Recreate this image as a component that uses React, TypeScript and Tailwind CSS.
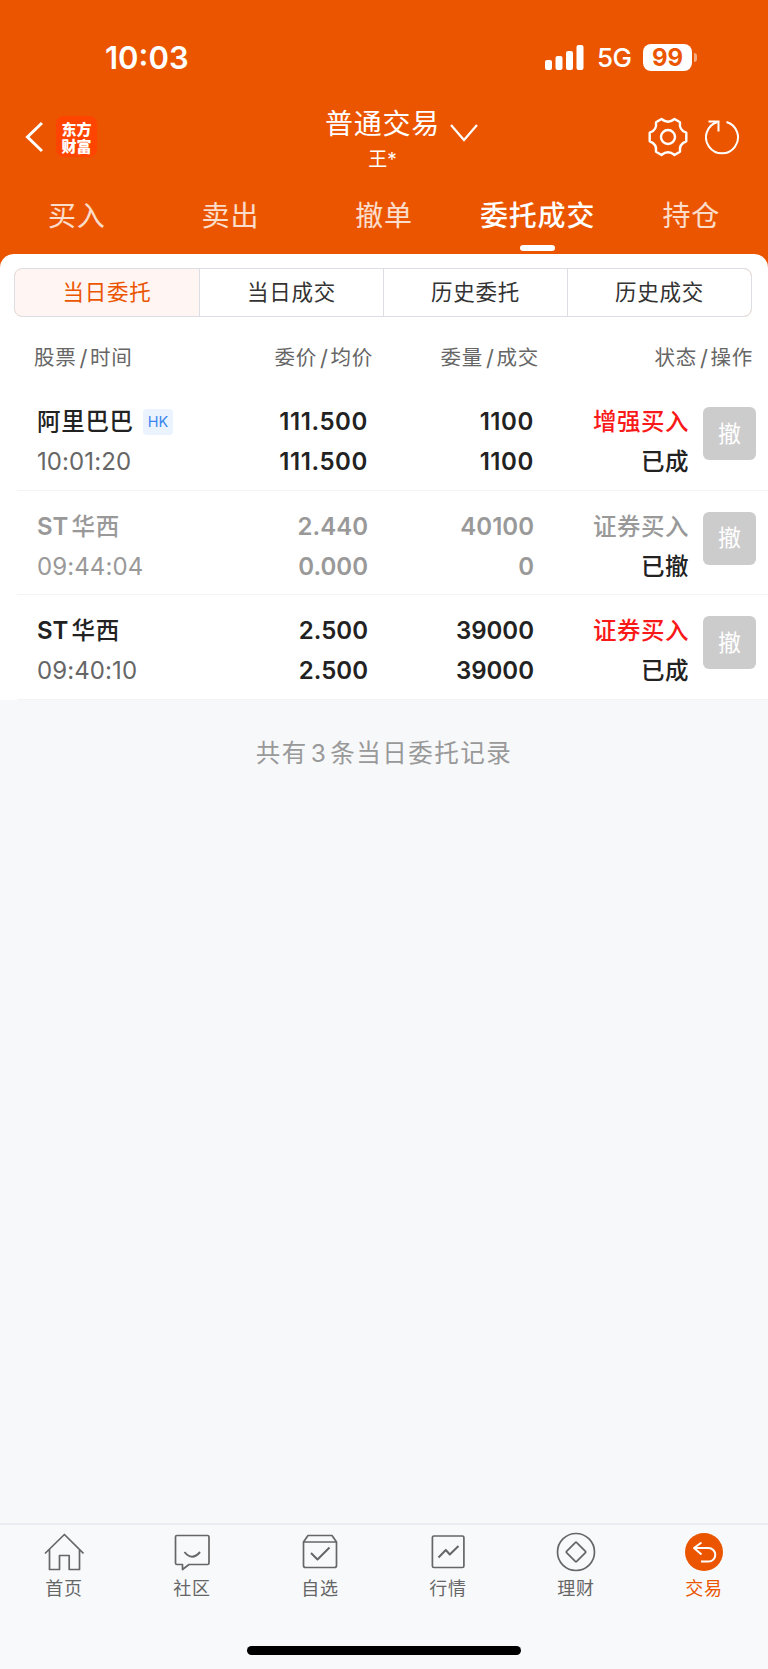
import type { ReactNode } from "react";
import clsx from "clsx";

const tabs = ["买入", "卖出", "撤单", "委托成交", "持仓"];
const segments = ["当日委托", "当日成交", "历史委托", "历史成交"];

type Order = {
  prefix?: string;
  name: string;
  market?: string;
  time: string;
  price: string;
  avg: string;
  amount: string;
  filled: string;
  action: string;
  status: string;
  canceled?: boolean;
};

const orders: Order[] = [
  { name: "阿里巴巴", market: "HK", time: "10:01:20", price: "111.500", avg: "111.500", amount: "1100", filled: "1100", action: "增强买入", status: "已成" },
  { prefix: "ST", name: "华西", time: "09:44:04", price: "2.440", avg: "0.000", amount: "40100", filled: "0", action: "证券买入", status: "已撤", canceled: true },
  { prefix: "ST", name: "华西", time: "09:40:10", price: "2.500", avg: "2.500", amount: "39000", filled: "39000", action: "证券买入", status: "已成" },
];

const StatusBar = () => (
  <div className="flex h-[100px] items-start justify-between pl-[105px] pr-[71px] pt-[36px] text-white">
    <span className="pt-[1px] text-[31px] font-semibold leading-[42px]">10:03</span>
    <div className="flex h-[42px] items-center">
      <svg width="39" height="25" viewBox="0 0 39 25" fill="currentColor" className="mr-[13px]">
        <rect x="0" y="15" width="7" height="10" rx="2" />
        <rect x="10.5" y="11" width="7" height="14" rx="2" />
        <rect x="21" y="6" width="7" height="19" rx="2" />
        <rect x="31.5" y="0" width="7" height="25" rx="2" />
      </svg>
      <span className="w-[46px] pt-[2px] text-[26px] font-medium leading-[42px] tracking-[-0.5px]">5G</span>
      <span className="h-[27px] w-[49px] rounded-[8px] bg-white text-center text-[24px] font-bold leading-[27px] text-[#eb5500]">99</span>
      <span className="ml-[2px] h-[9px] w-[3px] rounded-r-full bg-white/50" />
    </div>
  </div>
);

const Header = () => (
  <header className="flex h-[80px] items-center justify-between pl-[25px] pr-[27px] text-white">
    <div className="flex w-[250px] items-center pb-[7px]">
      <svg width="18" height="32" viewBox="0 0 18 32" fill="none" stroke="currentColor" strokeWidth="3">
        <path d="M17 2 2.500 16 17 30" />
      </svg>
      <div className="ml-[13px] flex size-[41px] flex-col items-center justify-center rounded-[8px] bg-[#ff4400] font-['Noto_Sans_CJK_SC',sans-serif] text-[15px] font-black leading-[17px]">
        <span>东方</span>
        <span>财富</span>
      </div>
    </div>
    <div className="flex pb-[1px]">
      <div className="flex flex-col items-center">
        <span className="text-[28px] leading-[38px] tracking-[0.8px]">普通交易</span>
        <span className="mt-[1px] text-[19px] leading-[31px]">王*</span>
      </div>
      <svg width="30" height="20" viewBox="0 0 30 20" fill="none" stroke="currentColor" strokeWidth="2.2" className="ml-[9px] mt-[18px]">
        <path d="M2 2 15 17 28 2" />
      </svg>
    </div>
    <div className="flex w-[212px] items-center justify-end gap-[17px] pb-[7px]">
      <svg width="40" height="40" viewBox="0 0 40 40" fill="none" stroke="currentColor" strokeWidth="2.4" strokeLinejoin="round">
        <path d="M8 5.200 13.500 2Q20 7.500 26.500 2L32 5.200Q30.800 13.200 38.300 15.700V24.300Q30.800 26.800 32 34.800L26.500 38Q20 32.500 13.500 38L8 34.800Q9.200 26.800 1.700 24.300V15.700Q9.200 13.200 8 5.200Z" />
        <circle cx="20" cy="20" r="7" />
      </svg>
      <svg width="36" height="36" viewBox="0 0 36 36" fill="none" stroke="currentColor" strokeWidth="2">
        <path d="M21.500 3A16 16 0 1 1 12.500 3" />
        <path d="M3.500 2.500H13.500V12.500" />
      </svg>
    </div>
  </header>
);

const Tabs = () => (
  <nav className="grid h-[74px] grid-cols-5 text-[28px] text-white">
    {tabs.map((tab) => {
      const active = tab === "委托成交";
      return (
        <div key={tab} className="flex flex-col items-center pt-[15px]">
          <span className={clsx("whitespace-nowrap leading-[42px] tracking-[0.8px]", active ? "font-medium" : "text-white/80")}>{tab}</span>
          {active && <span className="mt-[8px] h-[6px] w-[35px] rounded-full bg-white" />}
        </div>
      );
    })}
  </nav>
);

const Segments = () => (
  <div className="relative ml-[14px] mr-[16px] grid h-[49px] grid-cols-4 overflow-hidden rounded-[8px] border border-[#dddee4]">
    {segments.map((label, i) => (
      <div
        key={label}
        className={clsx(
          "flex items-center justify-center text-[21.5px] tracking-[0.7px]",
          i === 0 ? "bg-[#fff6f3] text-[#eb5500]" : "border-l border-[#dddee4] text-[#333]",
        )}
      >
        {label}
      </div>
    ))}
    {/* Accent corners */}
    <span className="absolute -left-px -top-px size-[10px] rounded-tl-[8px] border-l border-t border-[#eea57f]" />
    <span className="absolute -bottom-px -left-px size-[10px] rounded-bl-[8px] border-b border-l border-[#eea57f]" />
    <span className="absolute -right-px -top-px size-[10px] rounded-tr-[8px] border-r border-t border-[#eea57f]" />
    <span className="absolute -bottom-px -right-px size-[10px] rounded-br-[8px] border-b border-r border-[#eea57f]" />
  </div>
);

const HeadCell = ({ a, b }: { a: string; b: string }) => (
  <span className="flex justify-end tracking-[0.7px]">
    {a}
    <span className="ml-[3px] mr-[2px] text-[22px]">/</span>
    {b}
  </span>
);

const OrderRow = ({ order }: { order: Order }) => {
  const tone = order.canceled ? "text-[#999]" : "text-[#222]";
  const spread = order.price.startsWith("11") && "tracking-[0.6px]";
  return (
    <div className="ml-[17px] flex h-[104.6px] border-b border-[#f2f3f5] pl-[20px] pt-[16px] text-[24px] leading-[40px]">
      <div className="w-[180px]">
        <div className={clsx("flex items-center font-medium", tone)}>
          {order.prefix && <span className="mr-[3px] text-[24px] font-semibold">{order.prefix}</span>}
          <span className="text-[23.5px] tracking-[0.7px]">{order.name}</span>
          {order.market && (
            <span className="ml-[9px] rounded-[4px] bg-[#eaf3fe] px-[5px] text-[14.5px] font-normal leading-[26px] text-[#3b86f0]">{order.market}</span>
          )}
        </div>
        <div className={clsx("tracking-[0.1px]", order.canceled ? "text-[#999]" : "text-[#666]")}>{order.time}</div>
      </div>
      <div className={clsx("w-[151px] text-right font-semibold", tone, spread)}>
        <div>{order.price}</div>
        <div>{order.avg}</div>
      </div>
      <div className={clsx("w-[166px] text-right font-semibold", tone, spread)}>
        <div>{order.amount}</div>
        <div>{order.filled}</div>
      </div>
      <div className="w-[155px] text-right text-[23.5px] font-medium tracking-[0.5px]">
        <div className={order.canceled ? "text-[#999]" : "text-[#fa1919]"}>{order.action}</div>
        <div className="text-[#222]">{order.status}</div>
      </div>
      <button className="ml-[14px] mt-[5px] size-[53px] shrink-0 rounded-[6px] bg-[#ccc] text-[23px] text-white">撤</button>
    </div>
  );
};

const NavItem = ({ label, active, children }: { label: string; active?: boolean; children: ReactNode }) => (
  <div className={clsx("flex flex-col items-center pt-[7px]", active ? "text-[#eb5500]" : "text-[#666]")}>
    <svg width="40" height="40" viewBox="0 0 40 40" fill="none" stroke="currentColor" strokeWidth="1.7" strokeLinejoin="round">
      {children}
    </svg>
    <span className="mt-[3px] text-[18px] leading-[28px] tracking-[0.7px]">{label}</span>
  </div>
);

const BottomNav = () => (
  <footer className="flex h-[146px] flex-col border-t-2 border-[#eaecf1] bg-[#f8f9fb]">
    <div className="grid grid-cols-6">
      <NavItem label="首页">
        <path d="M1 21.500 20.400 2.500 39.500 21.500M5.500 17.500V37.500H15.500V23.500H25.200V37.500H35.500V17.500" />
      </NavItem>
      <NavItem label="社区">
        <path d="M5 3.500H35.500Q37 3.500 37 5V31Q37 32.500 35.500 32.500H17L10.500 37.500V32.500H5Q3.500 32.500 3.500 31V5Q3.500 3.500 5 3.500Z" />
        <path d="M12.500 20Q20 29.500 28 20" strokeWidth="2" />
      </NavItem>
      <NavItem label="自选">
        <path d="M3.500 10 8 3.500H32L36.500 10V33.500Q36.500 35.500 34.500 35.500H5.500Q3.500 35.500 3.500 33.500ZM3.500 10H36.500" />
        <path d="M11 21 17.500 27.500 29.500 15.500" strokeWidth="2" />
      </NavItem>
      <NavItem label="行情">
        <rect x="4.400" y="4" width="31.500" height="31.500" rx="1.500" />
        <path d="M10.500 25.500 17.800 18 21.800 22.500 30.500 14" strokeWidth="2" />
      </NavItem>
      <NavItem label="理财">
        <circle cx="20" cy="20" r="18.500" />
        <rect x="12.800" y="12.800" width="14.400" height="14.400" rx="1" transform="rotate(45 20 20)" />
      </NavItem>
      <NavItem label="交易" active>
        <circle cx="20" cy="20" r="19" fill="currentColor" stroke="none" />
        <path d="M17.500 10.500 10 16 17.500 22.500M10 16H24.500A6.800 6.800 0 0 1 24.500 29.600H17" stroke="#fff" strokeWidth="2" />
      </NavItem>
    </div>
    <span className="mx-auto mt-[43px] h-[9px] w-[274px] rounded-full bg-black" />
  </footer>
);

export default function App() {
  return (
    <div className="flex h-[1669px] w-[768px] flex-col overflow-hidden bg-[#f7f8fa] font-['Inter','Noto_Sans_CJK_SC',sans-serif]">
      <div className="bg-[#eb5500]">
        <StatusBar />
        <Header />
        <Tabs />
        <div className="h-[131px] rounded-t-[14px] bg-white pt-[14px]">
          <Segments />
          <div className="flex pl-[34px] pt-[26px] text-[20.5px] leading-[30px] text-[#666]">
            <div className="flex w-[172px]">
              <HeadCell a="股票" b="时间" />
            </div>
            <div className="w-[167px]">
              <HeadCell a="委价" b="均价" />
            </div>
            <div className="w-[166px]">
              <HeadCell a="委量" b="成交" />
            </div>
            <div className="w-[214px]">
              <HeadCell a="状态" b="操作" />
            </div>
          </div>
        </div>
      </div>
      <main className="flex-1">
        <div className="bg-white pt-[1px]">
          {orders.map((order) => (
            <OrderRow key={order.time} order={order} />
          ))}
        </div>
        <p className="pt-[33px] text-center text-[24.5px] leading-[40px] tracking-[1.500px] text-[#999]">
          共有<span className="mx-[3px]">3</span>条当日委托记录
        </p>
      </main>
      <BottomNav />
    </div>
  );
}
